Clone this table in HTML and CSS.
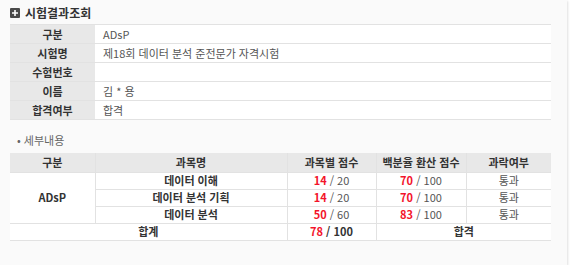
FILE: index.html
```html
<!DOCTYPE html>
<html lang="ko">
<head>
<meta charset="utf-8">
<link rel="stylesheet" href="styles.css">
</head>
<body>
<div class="panel">
  <h2 class="title"><span class="icon"><svg width="10" height="10" viewBox="0 0 10 10"><rect width="10" height="10" rx="1" fill="#4a4a4a"/><path d="M5 2v6M2 5h6" stroke="#fff" stroke-width="1.6"/></svg></span>시험결과조회</h2>
  <table class="info">
    <tr><th>구분</th><td>ADsP</td></tr>
    <tr><th>시험명</th><td>제18회 데이터 분석 준전문가 자격시험</td></tr>
    <tr><th>수험번호</th><td></td></tr>
    <tr><th>이름</th><td>김 * 용</td></tr>
    <tr><th>합격여부</th><td>합격</td></tr>
  </table>
  <p class="sub">• 세부내용</p>
  <table class="detail">
    <colgroup><col class="c1"><col class="c2"><col class="c3"><col class="c4"><col class="c5"></colgroup>
    <tr class="head"><th>구분</th><th>과목명</th><th>과목별 점수</th><th>백분율 환산 점수</th><th>과락여부</th></tr>
    <tr><td rowspan="3" class="b">ADsP</td><td class="b">데이터 이해</td><td><em>14</em> / 20</td><td><em>70</em> / 100</td><td>통과</td></tr>
    <tr><td class="b">데이터 분석 기획</td><td><em>14</em> / 20</td><td><em>70</em> / 100</td><td>통과</td></tr>
    <tr><td class="b">데이터 분석</td><td><em>50</em> / 60</td><td><em>83</em> / 100</td><td>통과</td></tr>
    <tr><td colspan="2" class="b">합계</td><td class="b"><em>78</em> / 100</td><td colspan="2" class="b">합격</td></tr>
  </table>
</div>
</body>
</html>
```
FILE: styles.css
```css
html, body { margin: 0; padding: 0; background: #fff; }
body { font-family: "Noto Sans CJK KR", "Liberation Sans", sans-serif; font-size: 11px; color: #555; }
.panel {
  width: 557px; height: 258px; padding: 7px 0 0 10px;
  background: #fafafa;
  box-shadow: 1px 1px 2px rgba(0,0,0,0.12);
}
.title {
  margin: 0; height: 12px; line-height: 12px;
  display: flex; align-items: center; gap: 5px;
  font-size: 12px; font-weight: bold; color: #333;
}
.icon { display: flex; }
table { border-collapse: collapse; width: 541px; margin-top: 5px; }
.info th, .info td { height: 18px; padding: 0; border-top: 1px solid #e2e2e2; border-bottom: 1px solid #e2e2e2; line-height: 16px; }
.info th { width: 85px; background: #e8e8e8; color: #333; font-weight: bold; text-align: center; }
.info td { background: #fff; padding-left: 8px; color: #555; }
.sub { margin: 14px 0 0 7px; height: 12px; line-height: 12px; color: #666; }
.detail { margin-top: 7px; table-layout: fixed; }
.c1 { width: 85px; } .c2 { width: 192px; } .c3 { width: 89px; } .c4 { width: 90px; } .c5 { width: 85px; }
.detail th, .detail td { box-sizing: border-box; padding: 0; text-align: center; border: 1px solid #e2e2e2; line-height: 15px; }
.detail tr > :first-child { border-left: none; }
.detail tr > :last-child { border-right: none; }
.detail th { height: 19px; background: #e8e8e8; color: #333; font-weight: bold; border-top: none; }
.detail td { height: 17px; background: #fff; color: #555; }
.detail td.b { font-weight: bold; color: #333; }
em { font-style: normal; font-weight: bold; color: #f3142a; }
```
